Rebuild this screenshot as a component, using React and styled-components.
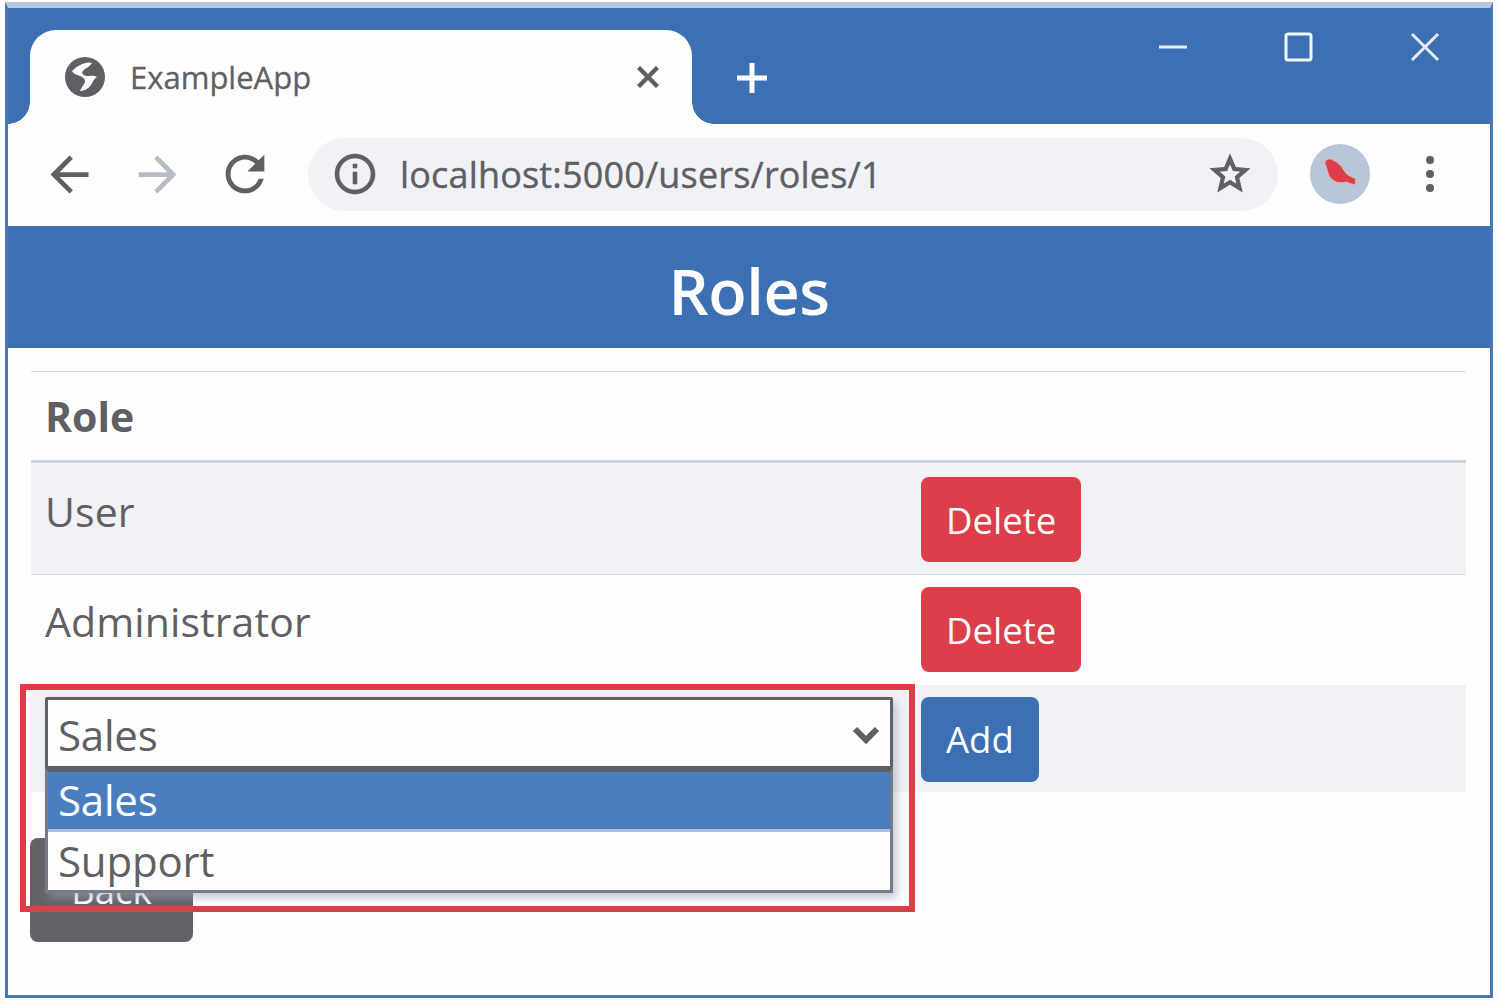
import styled, { createGlobalStyle } from "styled-components";

const GlobalStyle = createGlobalStyle`
  html, body {
    margin: 0;
    padding: 0;
    background: #fdfdfd;
  }
`;

const Page = styled.div`
  position: relative;
  width: 1500px;
  height: 1006px;
  box-sizing: border-box;
  padding: 2px 7px 8px 5px;
  overflow: hidden;
  background: #fdfdfd;
  color: #5f5f64;
  font-family: "Open Sans", "Liberation Sans", sans-serif;
`;

const Window = styled.div`
  height: 100%;
  box-sizing: border-box;
  border-top: 6px solid #b9c6da;
  border-left: 3px solid #4478bb;
  border-right: 3px solid #4478bb;
  border-bottom: 3px solid #4478bb;
  background: #fdfdfd;
`;

const TitleBar = styled.div`
  display: flex;
  align-items: flex-end;
  height: 116px;
  padding-left: 22px;
  background: #3d70b2;
`;

const Tab = styled.div`
  position: relative;
  display: flex;
  align-items: center;
  width: 662px;
  height: 94px;
  box-sizing: border-box;
  padding: 0 33px 0 35px;
  border-radius: 26px 26px 0 0;
  background: #fdfdfd;

  &::before,
  &::after {
    content: "";
    position: absolute;
    bottom: 0;
    width: 22px;
    height: 22px;
  }
  &::before {
    left: -22px;
    background: radial-gradient(circle at 0 0, #3d70b2 21.5px, #fdfdfd 22px);
  }
  &::after {
    right: -22px;
    background: radial-gradient(circle at 100% 0, #3d70b2 21.5px, #fdfdfd 22px);
  }
`;

const TabTitle = styled.span`
  flex: 1;
  margin-left: 25px;
  font-size: 31px;
  letter-spacing: 0;
  -webkit-text-stroke: 0.3px #5f5f64;
`;

const NewTab = styled.div`
  display: flex;
  align-self: center;
  margin: 24px 0 0 44px;
`;

const WindowControls = styled.div`
  display: flex;
  align-self: flex-start;
  margin-left: auto;
  margin-top: 24px;
  padding-right: 50px;
  gap: 96px;
`;

const Toolbar = styled.div`
  display: flex;
  align-items: center;
  height: 102px;
  box-sizing: border-box;
  padding: 0 0 2px 17px;
  background: #fdfdfd;
`;

const NavButton = styled.div`
  display: flex;
  justify-content: center;
  width: 88px;
`;

const Omnibox = styled.div`
  display: flex;
  align-items: center;
  width: 970px;
  height: 73px;
  box-sizing: border-box;
  margin-left: 19px;
  padding: 0 25px 0 23px;
  border-radius: 37px;
  background: #f0f2f6;
`;

const Url = styled.span`
  flex: 1;
  margin-left: 21px;
  font-size: 36px;
  letter-spacing: 0.17px;
  white-space: nowrap;
  -webkit-text-stroke: 0.4px #5f5f64;
`;

const Avatar = styled.div`
  display: flex;
  align-items: center;
  justify-content: center;
  width: 60px;
  height: 60px;
  margin-left: 32px;
  border-radius: 50%;
  background: #b9c6da;
`;

const MenuDots = styled.div`
  display: flex;
  flex-direction: column;
  gap: 6px;
  margin-left: 56px;
`;

const Dot = styled.span`
  width: 8px;
  height: 8px;
  border-radius: 50%;
  background: #5f5f64;
`;

const Header = styled.h1`
  margin: 0;
  height: 122px;
  line-height: 130px;
  background: #3d70b2;
  color: #fdfdfd;
  font-size: 63px;
  font-weight: 600;
  letter-spacing: -0.4px;
  text-align: center;
`;

const Content = styled.div`
  padding: 23px 24px 0 22px;
`;

const Table = styled.table`
  width: 1435px;
  margin-left: 1px;
  border-collapse: collapse;
  table-layout: fixed;
  font-size: 41px;
  letter-spacing: 0.1px;
`;

const HeadCell = styled.th`
  height: 90px;
  box-sizing: border-box;
  padding: 0 14px 0;
  border-top: 1px solid #d3dbe7;
  border-bottom: 3px solid #ccd5e3;
  font-weight: 700;
  text-align: left;
  letter-spacing: 0;
`;

const Row = styled.tr`
  background: ${(props) => (props.$striped ? "#f0f2f6" : "transparent")};
`;

const Cell = styled.td`
  height: ${(props) => props.$height}px;
  box-sizing: border-box;
  padding: ${(props) => props.$top}px 14px 0;
  border-bottom: ${(props) => (props.$line ? "1px solid #d3dbe7" : "none")};
  vertical-align: top;
  line-height: 46px;
`;

const ButtonCell = styled(Cell)`
  padding-right: 0;
`;

const Button = styled.button`
  display: block;
  height: 85px;
  box-sizing: border-box;
  padding: 0 25px;
  border: none;
  border-radius: 8px;
  background: ${(props) => props.$bg};
  color: #fdfdfd;
  font-family: inherit;
  font-size: 36.5px;
  letter-spacing: 0;
`;

const BackButton = styled(Button)`
  width: 163px;
  height: 104px;
  margin-top: 46px;
`;

const SelectCell = styled(Cell)`
  position: relative;
  padding: 0;
`;

const SelectBox = styled.div`
  position: absolute;
  top: 12px;
  left: 14px;
  width: 848px;
  box-sizing: border-box;
  z-index: 2;
  box-shadow: 4px 5px 8px rgba(150, 165, 190, 0.55);
`;

const SelectValue = styled.div`
  display: flex;
  align-items: center;
  justify-content: space-between;
  height: 69px;
  box-sizing: border-box;
  padding: 4px 10px 0 10px;
  border: 3px solid #606064;
  border-bottom: none;
  border-radius: 3px 3px 0 0;
  background: #fdfdfd;
  font-size: 42px;
  letter-spacing: -0.2px;
  line-height: 1;
`;

const OptionList = styled.div`
  border: 3px solid #7a7a84;
  border-top: 6px solid #606064;
  background: #fdfdfd;
`;

const Option = styled.div`
  display: flex;
  align-items: center;
  height: ${(props) => (props.$selected ? 60 : 58)}px;
  box-sizing: border-box;
  padding-left: 10px;
  border-bottom: ${(props) => (props.$selected ? "3px solid #abbdd8" : "none")};
  background: ${(props) => (props.$selected ? "#4a7dbd" : "transparent")};
  color: ${(props) => (props.$selected ? "#fdfdfd" : "#5f5f64")};
  font-size: 42px;
  letter-spacing: -0.2px;
`;

// red annotation drawn on top of the screenshot
const Highlight = styled.div`
  position: absolute;
  left: 20px;
  top: 684px;
  width: 895px;
  height: 228px;
  box-sizing: border-box;
  border: 6px solid #dc3f49;
  z-index: 3;
  pointer-events: none;
`;

const Globe = () => (
  <svg width="40" height="40" viewBox="0 0 40 40">
    <circle cx="20" cy="20" r="20" fill="#5f5f64" />
    <path fill="#fdfdfd" d="M27 6C21 4 13 8 7 14c2 4 7 4 10 6 3 2 4 4 2 7-1 2-3 4-4 7 4 0 8-2 11-6 2-3 2-5 6-8-3-2-7-1-11-1-3-1-5-3-3-5 2-3 7-4 9-8z" />
  </svg>
);

const CloseGlyph = ({ size, color, width }) => (
  <svg width={size} height={size} viewBox="0 0 30 30">
    <path d="M2 2L28 28M28 2L2 28" stroke={color} strokeWidth={width} fill="none" />
  </svg>
);

const Arrow = ({ color, flip }) => (
  <svg width="57" height="57" viewBox="0 0 24 24" style={flip ? { transform: "scaleX(-1)" } : undefined}>
    <path fill={color} d="M20 11H7.83l5.59-5.59L12 4l-8 8 8 8 1.41-1.41L7.83 13H20v-2z" />
  </svg>
);

const Reload = () => (
  <svg width="58" height="58" viewBox="0 0 24 24">
    <path fill="#5f5f64" d="M17.65 6.35C16.2 4.9 14.21 4 12 4c-4.42 0-7.99 3.58-7.99 8s3.57 8 7.99 8c3.73 0 6.84-2.55 7.73-6h-2.08c-.82 2.33-3.04 4-5.65 4-3.31 0-6-2.69-6-6s2.69-6 6-6c1.66 0 3.14.69 4.22 1.78L13 11h7V4l-2.35 2.35z" />
  </svg>
);

const Info = () => (
  <svg width="48" height="48" viewBox="0 0 24 24">
    <path fill="#5f5f64" stroke="#5f5f64" strokeWidth="0.3" d="M11 7h2v2h-2zm0 4h2v6h-2zm1-9C6.48 2 2 6.48 2 12s4.48 10 10 10 10-4.48 10-10S17.52 2 12 2zm0 18c-4.41 0-8-3.59-8-8s3.59-8 8-8 8 3.59 8 8-3.59 8-8 8z" />
  </svg>
);

const Star = () => (
  <svg width="46" height="46" viewBox="0 0 24 24">
    <path fill="#5f5f64" stroke="#5f5f64" strokeWidth="0.6" d="M22 9.24l-7.19-.62L12 2 9.19 8.63 2 9.24l5.46 4.73L5.82 21 12 17.27 18.18 21l-1.63-7.03L22 9.24zM12 15.4l-3.76 2.27 1-4.28-3.32-2.88 4.38-.38L12 6.1l1.71 4.04 4.38.38-3.32 2.88 1 4.28L12 15.4z" />
  </svg>
);

const Bird = () => (
  <svg width="36" height="34" viewBox="0 0 36 34">
    <path fill="#dc3f49" stroke="#eeaaa5" strokeWidth="1" d="M3 5C4 2 8 1 11 3c4 2 8 5 10 9 2 3 4 6 7 7l6 3-1 6-9-3c-3 1-7 1-10 0-4-2-7-5-8-9-1-4-2-7-3-9z" />
  </svg>
);

const Chevron = () => (
  <svg width="28" height="20" viewBox="0 0 28 20">
    <path d="M3 4L14 15L25 4" fill="none" stroke="#5f5f64" strokeWidth="6" />
  </svg>
);

const App = () => {
  return (
    <Page>
      <GlobalStyle />
      <Window>
        <TitleBar>
          <Tab>
            <Globe />
            <TabTitle>ExampleApp</TabTitle>
            <CloseGlyph size={22} color="#5f5f64" width={6} />
          </Tab>
          <NewTab>
            <svg width="32" height="32" viewBox="0 0 32 32">
              <path d="M16 1V31M1 16H31" stroke="#fdfdfd" strokeWidth="5" />
            </svg>
          </NewTab>
          <WindowControls>
            <svg width="30" height="30" viewBox="0 0 30 30">
              <path d="M1 15H29" stroke="#e6ebf3" strokeWidth="3" />
            </svg>
            <svg width="30" height="30" viewBox="0 0 30 30">
              <rect x="2" y="2" width="25" height="26" rx="2" fill="none" stroke="#f4f6fa" strokeWidth="3" />
            </svg>
            <CloseGlyph size={30} color="#e6ebf3" width={3} />
          </WindowControls>
        </TitleBar>
        <Toolbar>
          <NavButton><Arrow color="#5f5f64" /></NavButton>
          <NavButton><Arrow color="#b9bcc6" flip /></NavButton>
          <NavButton><Reload /></NavButton>
          <Omnibox>
            <Info />
            <Url>localhost:5000/users/roles/1</Url>
            <Star />
          </Omnibox>
          <Avatar><Bird /></Avatar>
          <MenuDots>
            <Dot />
            <Dot />
            <Dot />
          </MenuDots>
        </Toolbar>
        <Header>Roles</Header>
        <Content>
          <Table>
            <colgroup>
              <col width="876" />
              <col />
            </colgroup>
            <thead>
              <tr>
                <HeadCell>Role</HeadCell>
                <HeadCell />
              </tr>
            </thead>
            <tbody>
              <Row $striped>
                <Cell $height={113} $top={25} $line>User</Cell>
                <ButtonCell $height={113} $top={14} $line><Button $bg="#dc3f49">Delete</Button></ButtonCell>
              </Row>
              <Row>
                <Cell $height={110} $top={23}>Administrator</Cell>
                <ButtonCell $height={110} $top={12}><Button $bg="#dc3f49">Delete</Button></ButtonCell>
              </Row>
              <Row $striped>
                <SelectCell $height={107}>
                  <SelectBox>
                    <SelectValue>
                      Sales
                      <Chevron />
                    </SelectValue>
                    <OptionList>
                      <Option $selected>Sales</Option>
                      <Option>Support</Option>
                    </OptionList>
                  </SelectBox>
                </SelectCell>
                <ButtonCell $height={107} $top={12}><Button $bg="#3d70b2">Add</Button></ButtonCell>
              </Row>
            </tbody>
          </Table>
          <BackButton $bg="#636367">Back</BackButton>
        </Content>
      </Window>
      <Highlight />
    </Page>
  );
};

export default App;
